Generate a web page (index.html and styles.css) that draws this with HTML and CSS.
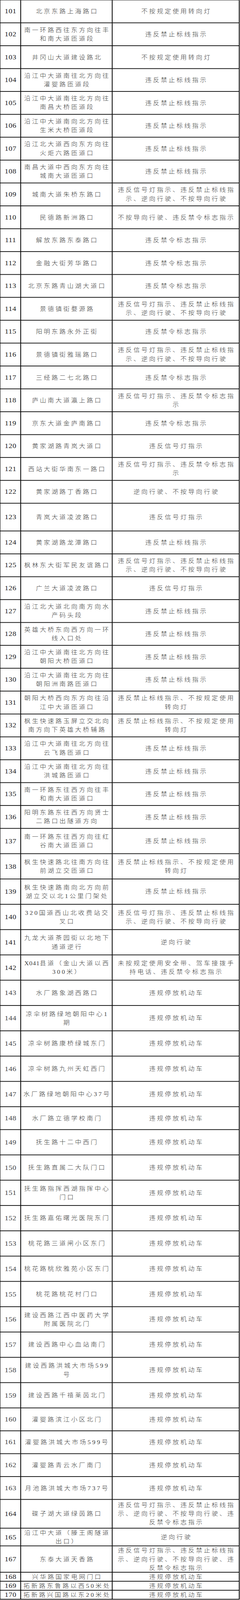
FILE: index.html
```html
<!DOCTYPE html>
<html lang="zh-CN">
<head>
<meta charset="utf-8">
<title>交通违法抓拍点位</title>
<link rel="stylesheet" href="styles.css">
</head>
<body>
<div class="page">
<div class="tbl">
<div class="row h66"><div class="c n">101</div><div class="c l">北京东路上海路口</div><div class="c v">不按规定使用转向灯</div></div>
<div class="row h66"><div class="c n">102</div><div class="c l">南一环路西往东方向往丰和南大道匝道段</div><div class="c v">违反禁止标线指示</div></div>
<div class="row h66"><div class="c n">103</div><div class="c l">井冈山大道建设路北</div><div class="c v">不按规定使用转向灯</div></div>
<div class="row h66"><div class="c n">104</div><div class="c l">沿江中大道南往北方向往灌婴路匝道段</div><div class="c v">违反禁止标线指示</div></div>
<div class="row h66"><div class="c n">105</div><div class="c l">沿江中大道南往北方向往南昌大桥匝道段</div><div class="c v">违反禁止标线指示</div></div>
<div class="row h66"><div class="c n">106</div><div class="c l">沿江中大道南向北方向往生米大桥匝道段</div><div class="c v">违反禁止标线指示</div></div>
<div class="row h66"><div class="c n">107</div><div class="c l">沿江北大道西向东方向往火炬六路匝道口</div><div class="c v">违反禁止标线指示</div></div>
<div class="row h66"><div class="c n">108</div><div class="c l">南昌大道中西向东方向往城南大道匝道口</div><div class="c v">违反禁止标线指示</div></div>
<div class="row h66"><div class="c n">109</div><div class="c l">城南大道朱桥东路口</div><div class="c v">违反信号灯指示、违反禁止标线指示、逆向行驶、不按导向行驶</div></div>
<div class="row h66"><div class="c n">110</div><div class="c l">民德路新洲路口</div><div class="c v">不按导向行驶、违反禁令标志指示</div></div>
<div class="row h66"><div class="c n">111</div><div class="c l">解放东路东泰路口</div><div class="c v">违反禁令标志指示</div></div>
<div class="row h66"><div class="c n">112</div><div class="c l">金融大街芳华路口</div><div class="c v">违反禁令标志指示</div></div>
<div class="row h66"><div class="c n">113</div><div class="c l">北京东路青山湖大道口</div><div class="c v">违反禁令标志指示</div></div>
<div class="row h66"><div class="c n">114</div><div class="c l">景德镇街婺源路</div><div class="c v">违反信号灯指示、违反禁止标线指示、逆向行驶、不按导向行驶</div></div>
<div class="row h66"><div class="c n">115</div><div class="c l">阳明东路永外正街</div><div class="c v">违反禁令标志指示</div></div>
<div class="row h66"><div class="c n">116</div><div class="c l">景德镇街雅瑶路口</div><div class="c v">违反信号灯指示、违反禁止标线指示、逆向行驶、不按导向行驶</div></div>
<div class="row h66"><div class="c n">117</div><div class="c l">三经路二七北路口</div><div class="c v">违反禁令标志指示</div></div>
<div class="row h66"><div class="c n">118</div><div class="c l">庐山南大道瀛上路口</div><div class="c v">违反信号灯指示、违反禁令标志指示</div></div>
<div class="row h66"><div class="c n">119</div><div class="c l">京东大道金庐南路口</div><div class="c v">违反禁令标志指示</div></div>
<div class="row h66"><div class="c n">120</div><div class="c l">黄家湖路青岚大道口</div><div class="c v">违反信号灯指示</div></div>
<div class="row h66"><div class="c n">121</div><div class="c l">西站大街华南东一路口</div><div class="c v">违反信号灯指示、违反禁令标志指示</div></div>
<div class="row h66"><div class="c n">122</div><div class="c l">黄家湖路丁香路口</div><div class="c v">逆向行驶、不按导向行驶</div></div>
<div class="row h80"><div class="c n">123</div><div class="c l">青岚大道凌波路口</div><div class="c v">违反信号灯指示</div></div>
<div class="row h66"><div class="c n">124</div><div class="c l">黄家湖路龙潭路口</div><div class="c v">违反禁止标线指示</div></div>
<div class="row h66"><div class="c n">125</div><div class="c l">枫林东大街军民友谊路口</div><div class="c v">违反信号灯指示、违反禁止标线指示、逆向行驶、不按导向行驶</div></div>
<div class="row h66"><div class="c n">126</div><div class="c l">广兰大道凌波路口</div><div class="c v">违反信号灯指示</div></div>
<div class="row h66"><div class="c n">127</div><div class="c l">沿江北大道北向南方向水产码头段</div><div class="c v">违反禁止标线指示</div></div>
<div class="row h66"><div class="c n">128</div><div class="c l">英雄大桥东向西方向一环线入口处</div><div class="c v">违反禁止标线指示</div></div>
<div class="row h66"><div class="c n">129</div><div class="c l">沿江中大道南往北方向往朝阳大桥匝道口</div><div class="c v">违反禁止标线指示</div></div>
<div class="row h66"><div class="c n">130</div><div class="c l">沿江中大道南往北方向往朝阳洲南路匝道口</div><div class="c v">违反禁止标线指示</div></div>
<div class="row h66"><div class="c n">131</div><div class="c l">朝阳大桥西向东方向往沿江中大道匝道口</div><div class="c v">违反禁止标线指示、不按规定使用转向灯</div></div>
<div class="row h66"><div class="c n">132</div><div class="c l">枫生快速路玉屏立交北向南方向下英雄大桥辅路</div><div class="c v">违反禁止标线指示、不按规定使用转向灯</div></div>
<div class="row h66"><div class="c n">133</div><div class="c l">沿江中大道南往北方向往云飞路匝道口</div><div class="c v">违反禁止标线指示</div></div>
<div class="row h66"><div class="c n">134</div><div class="c l">沿江中大道南往北方向往洪城路匝道口</div><div class="c v">违反禁止标线指示</div></div>
<div class="row h66"><div class="c n">135</div><div class="c l">南一环路东往西方向往丰和南大道匝道口</div><div class="c v">违反禁止标线指示</div></div>
<div class="row h66"><div class="c n">136</div><div class="c l">阳明东路东往西方向贤士二路口出隧道方向</div><div class="c v">违反禁止标线指示</div></div>
<div class="row h73"><div class="c n">137</div><div class="c l">南一环路东往西方向往红谷南大道匝道口</div><div class="c v">违反禁止标线指示</div></div>
<div class="row h73"><div class="c n">138</div><div class="c l">枫生快速路北往南方向往前湖立交匝道口</div><div class="c v">违反禁止标线指示、不按规定使用转向灯</div></div>
<div class="row h73"><div class="c n">139</div><div class="c l">枫生快速路南向北方向前湖立交以北1公里门架处</div><div class="c v">违反禁止标线指示</div></div>
<div class="row h73"><div class="c n">140</div><div class="c l">320国道西山北收费站交叉口</div><div class="c v">违反信号灯指示、违反禁止标线指示、逆向行驶、不按导向行驶</div></div>
<div class="row h73"><div class="c n">141</div><div class="c l">九龙大道茶园街以北地下通道逆行</div><div class="c v">逆向行驶</div></div>
<div class="row h73"><div class="c n">142</div><div class="c l"><p class="txt"><span class="tight">X041</span>县道（金山大道以西<wbr>300米）</p></div><div class="c v">未按规定使用安全带、驾车接拨手持电话、违反禁令标志指示</div></div>
<div class="row h73"><div class="c n g">143</div><div class="c l">水厂路象湖西路口</div><div class="c v">违规停放机动车</div></div>
<div class="row h73"><div class="c n g">144</div><div class="c l">凉伞树路绿地朝阳中心1期</div><div class="c v">违规停放机动车</div></div>
<div class="row h73"><div class="c n g">145</div><div class="c l">凉伞树路康桥绿城东门</div><div class="c v">违规停放机动车</div></div>
<div class="row h73"><div class="c n g">146</div><div class="c l">凉伞树路九州天虹西门</div><div class="c v">违规停放机动车</div></div>
<div class="row h73"><div class="c n g">147</div><div class="c l">水厂路绿地朝阳中心37号</div><div class="c v">违规停放机动车</div></div>
<div class="row h66"><div class="c n g">148</div><div class="c l">水厂路立德学校南门</div><div class="c v">违规停放机动车</div></div>
<div class="row h73"><div class="c n g">149</div><div class="c l">抚生路十二中西门</div><div class="c v">违规停放机动车</div></div>
<div class="row h73"><div class="c n g">150</div><div class="c l">抚生路直属二大队门口</div><div class="c v">违规停放机动车</div></div>
<div class="row h73"><div class="c n g">151</div><div class="c l">抚生路指挥西湖指挥中心门口</div><div class="c v">违规停放机动车</div></div>
<div class="row h73"><div class="c n g">152</div><div class="c l">抚生路嘉佑曙光医院东门</div><div class="c v">违规停放机动车</div></div>
<div class="row h73"><div class="c n g">153</div><div class="c l">桃花路三道闸小区东门</div><div class="c v">违规停放机动车</div></div>
<div class="row h73"><div class="c n g">154</div><div class="c l">桃花路桃欣雅苑小区东门</div><div class="c v">违规停放机动车</div></div>
<div class="row h73"><div class="c n g">155</div><div class="c l">桃花路桃花村门口</div><div class="c v">违规停放机动车</div></div>
<div class="row h73"><div class="c n g">156</div><div class="c l">建设西路江西中医药大学附属医院北门</div><div class="c v">违规停放机动车</div></div>
<div class="row h73"><div class="c n g">157</div><div class="c l">建设西路中心血站南门</div><div class="c v">违规停放机动车</div></div>
<div class="row h73"><div class="c n g">158</div><div class="c l">建设西路洪城大市场599号</div><div class="c v">违规停放机动车</div></div>
<div class="row h73"><div class="c n g">159</div><div class="c l">建设西路千禧莱茵北门</div><div class="c v">违规停放机动车</div></div>
<div class="row h66"><div class="c n g">160</div><div class="c l">灌婴路滨江小区北门</div><div class="c v">违规停放机动车</div></div>
<div class="row h66"><div class="c n g">161</div><div class="c l">灌婴路洪城大市场599号</div><div class="c v">违规停放机动车</div></div>
<div class="row h66"><div class="c n g">162</div><div class="c l">灌婴路青云水厂南门</div><div class="c v">违规停放机动车</div></div>
<div class="row h66"><div class="c n g">163</div><div class="c l">月池路洪城大市场737号</div><div class="c v">违规停放机动车</div></div>
<div class="row h83"><div class="c n">164</div><div class="c l">碟子湖大道绿茵路口</div><div class="c v">违反信号灯指示、违反禁止标线指示、逆向行驶、不按导向行驶、违反禁令标志指示</div></div>
<div class="row h51"><div class="c n">165</div><div class="c l">沿江中大道（滕王阁隧道出口）</div><div class="c v">逆向行驶</div></div>
<div class="row h76"><div class="c n">167</div><div class="c l">东泰大道天香路</div><div class="c v">违反信号灯指示、违反禁止标线指示、逆向行驶、不按导向行驶、违反禁令标志指示</div></div>
<div class="row h26"><div class="c n">168</div><div class="c l">兴华路国家电网门口</div><div class="c v">违规停放机动车</div></div>
<div class="row h26"><div class="c n">169</div><div class="c l">拓新路东鲁路以西50米处</div><div class="c v">违规停放机动车</div></div>
<div class="row h26"><div class="c n">170</div><div class="c l">拓新路兴国路以东20米处</div><div class="c v">违规停放机动车</div></div>
</div>
</div>
</body>
</html>
```
FILE: styles.css
```css
html, body {
  margin: 0;
  padding: 0;
  background: #ffffff;
}

.page {
  height: 4096px;
  overflow: hidden;
}

.tbl {
  width: 612px;
  margin: -1px 0 0 -1px;
  border-top: 2px solid #000;
  border-left: 2px solid #000;
  transform: scaleY(0.887348);
  transform-origin: 0 0;
}

.row {
  display: flex;
}

.h26 { height: 26px; }
.h51 { height: 51px; }
.h66 { height: 66px; }
.h73 { height: 73px; }
.h76 { height: 76px; }
.h80 { height: 80px; }
.h83 { height: 83px; }

.c {
  box-sizing: border-box;
  flex: none;
  display: flex;
  align-items: center;
  justify-content: center;
  text-align: center;
  border-right: 2px solid #000;
  border-bottom: 2px solid #000;
}

.n {
  width: 53px;
  padding-left: 1px;
  font-family: "Liberation Serif", "Times New Roman", serif;
  font-size: 19px;
  line-height: 24px;
  letter-spacing: 0.5px;
  color: #1a1a1a;
}

.n.g {
  color: #444;
}

.l,
.v {
  font-family: "Liberation Serif", "Noto Sans CJK SC", serif;
  font-size: 16px;
  font-weight: 300;
  line-height: 25px;
  letter-spacing: 4px;
  color: #3a3a3a;
}

.l {
  width: 234px;
  padding: 0 1px 0 5px;
}

.v {
  width: 325px;
  padding: 0 6px 0 10px;
}

.txt {
  margin: 0;
}

.tight {
  letter-spacing: 1px;
}
```
